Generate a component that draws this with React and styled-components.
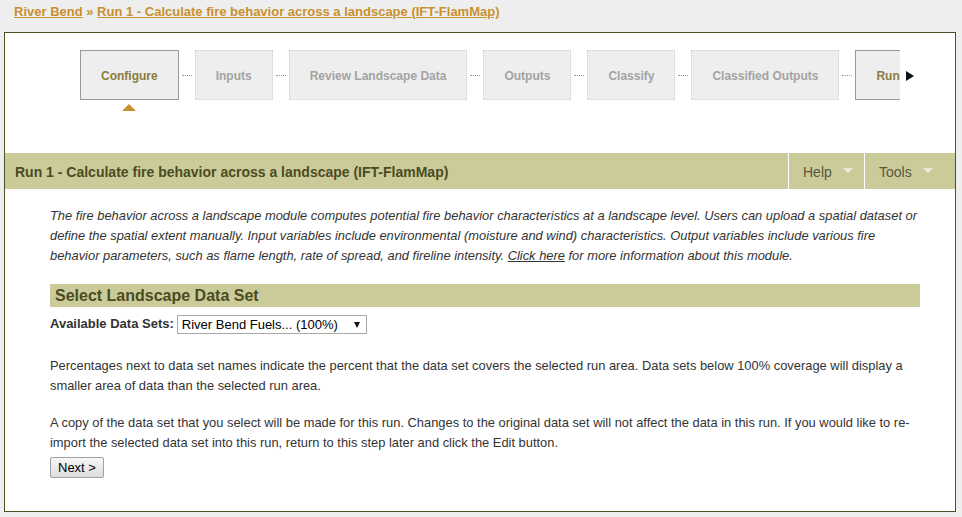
import styled, { createGlobalStyle } from 'styled-components';

const GlobalStyle = createGlobalStyle`
  html, body {
    margin: 0;
    padding: 0;
    background: #eeeeee;
    font-family: "Liberation Sans", Arial, sans-serif;
  }
`;

const Page = styled.div`
  padding: 3px 0 6px 4px;
`;

const Crumbs = styled.div`
  padding-left: 10px;
  height: 29px;
  font-size: 13px;
  font-weight: bold;
  line-height: 18px;
  color: #c8912e;

  a {
    color: #c8912e;
    text-decoration: underline;
  }
`;

const Frame = styled.div`
  width: 950px;
  height: 478px;
  border: 1px solid #4b5424;
  background: #ffffff;
  overflow: hidden;
`;

const StepsArea = styled.div`
  height: 120px;
  padding: 17px 0 0 75px;
  box-sizing: border-box;
  display: flex;
  align-items: flex-start;
`;

const StepsViewport = styled.div`
  width: 820px;
  overflow: hidden;
  height: 80px;
`;

const StepsTrack = styled.div`
  display: flex;
  align-items: center;
  width: max-content;
`;

const Step = styled.div`
  position: relative;
  height: 50px;
  box-sizing: border-box;
  padding: 1px 20px 0;
  display: flex;
  align-items: center;
  font-size: 12px;
  font-weight: bold;
  background: #eeeeee;
  color: ${({ $state }) => ($state === 'locked' ? '#a3a3a3' : '#8a7d3b')};
  border: 1px ${({ $state }) => ($state === 'locked' ? 'dotted #cfcfcf' : 'solid #999999')};
`;

const Pointer = styled.div`
  position: absolute;
  left: 50%;
  top: 53px;
  margin-left: -7px;
  width: 0;
  height: 0;
  border-left: 7px solid transparent;
  border-right: 7px solid transparent;
  border-bottom: 7px solid #c8912e;
`;

const Link = styled.div`
  width: 10px;
  margin: 1px 3px 0;
  border-top: 1px dotted #999999;
`;

const NextArrow = styled.div`
  margin: 21px 0 0 6px;
  width: 0;
  height: 0;
  border-top: 5px solid transparent;
  border-bottom: 5px solid transparent;
  border-left: 8px solid #111111;
`;

const HeaderBar = styled.div`
  display: flex;
  height: 36px;
  background: #cbcb9a;
  align-items: stretch;
`;

const HeaderTitle = styled.h1`
  flex: 1;
  margin: 0;
  padding: 1px 0 0 10px;
  display: flex;
  align-items: center;
  font-size: 14px;
  font-weight: bold;
  color: #4b4b22;
`;

const Menu = styled.div`
  width: ${({ $w }) => $w}px;
  border-left: 1px solid #ffffff;
  display: flex;
  align-items: center;
  padding: 1px 0 0 14px;
  box-sizing: border-box;
  gap: 11px;
  font-size: 14px;
  color: #56563a;
`;

const Caret = styled.span`
  width: 0;
  height: 0;
  border-left: 5px solid transparent;
  border-right: 5px solid transparent;
  border-top: 5px solid #ecebd6;
  margin-top: -2px;
`;

const Body = styled.div`
  padding: 17px 35px 0 45px;
  font-size: 12.9px;
  line-height: 20px;
  color: #333333;
`;

const Intro = styled.p`
  margin: 0;
  font-style: italic;

  a {
    color: #333333;
    text-decoration: underline;
  }
`;

const SectionHead = styled.h2`
  margin: 18px 0 0;
  height: 23px;
  line-height: 23px;
  padding-left: 5px;
  background: #cbcb9a;
  font-size: 16px;
  font-weight: bold;
  color: #4b4b22;
`;

const PickRow = styled.div`
  margin-top: 7px;
  display: flex;
  align-items: center;
  gap: 3px;
  height: 20px;
`;

const Label = styled.label`
  font-weight: bold;
  font-size: 13px;
  color: #333333;
`;

const SelectWrap = styled.div`
  position: relative;
  width: 190px;
  height: 19px;
`;

const Select = styled.select`
  appearance: none;
  width: 100%;
  height: 100%;
  margin: 0;
  padding: 0 0 0 4px;
  border: 1px solid #a9a9a9;
  background: #ffffff;
  font-family: "Liberation Sans", Arial, sans-serif;
  font-size: 13px;
  color: #000000;
`;

const SelectArrow = styled.span`
  position: absolute;
  right: 7px;
  top: 7px;
  width: 0;
  height: 0;
  border-left: 3.5px solid transparent;
  border-right: 3.5px solid transparent;
  border-top: 6px solid #111111;
  pointer-events: none;
`;

const Para = styled.p`
  margin: ${({ $top }) => $top}px 0 0;
`;

const Button = styled.button`
  margin-top: 4px;
  height: 21px;
  padding: 0 7px;
  border: 1px solid #a0a0a0;
  border-radius: 2px;
  background: linear-gradient(#f6f6f6, #dedede);
  font-family: "Liberation Sans", Arial, sans-serif;
  font-size: 13px;
  color: #000000;
`;

const steps = [
  { label: 'Configure', state: 'current' },
  { label: 'Inputs', state: 'locked' },
  { label: 'Review Landscape Data', state: 'locked' },
  { label: 'Outputs', state: 'locked' },
  { label: 'Classify', state: 'locked' },
  { label: 'Classified Outputs', state: 'locked' },
  { label: 'Run', state: 'available' },
];

const title = 'Run 1 - Calculate fire behavior across a landscape (IFT-FlamMap)';

export default function App() {
  return (
    <>
      <GlobalStyle />
      <Page>
        <Crumbs>
          <a>River Bend</a> » <a>{title}</a>
        </Crumbs>
        <Frame>
          <StepsArea>
            <StepsViewport>
              <StepsTrack>
                {steps.map((s, i) => [
                  i > 0 && <Link key={`l${i}`} />,
                  <Step key={s.label} $state={s.state}>
                    {s.label}
                    {s.state === 'current' && <Pointer />}
                  </Step>,
                ])}
              </StepsTrack>
            </StepsViewport>
            <NextArrow />
          </StepsArea>

          <HeaderBar>
            <HeaderTitle>{title}</HeaderTitle>
            <Menu $w={76}>
              Help <Caret />
            </Menu>
            <Menu $w={91}>
              Tools <Caret />
            </Menu>
          </HeaderBar>

          <Body>
            <Intro>
              The fire behavior across a landscape module computes potential fire behavior
              characteristics at a landscape level. Users can upload a spatial dataset or
              define the spatial extent manually. Input variables include environmental
              (moisture and wind) characteristics. Output variables include various fire
              behavior parameters, such as flame length, rate of spread, and fireline
              intensity. <a>Click here</a> for more information about this module.
            </Intro>

            <SectionHead>Select Landscape Data Set</SectionHead>
            <PickRow>
              <Label>Available Data Sets:</Label>
              <SelectWrap>
                <Select defaultValue="rb">
                  <option value="rb">River Bend Fuels... (100%)</option>
                </Select>
                <SelectArrow />
              </SelectWrap>
            </PickRow>

            <Para $top={22}>
              Percentages next to data set names indicate the percent that the data set
              covers the selected run area. Data sets below 100% coverage will display a
              smaller area of data than the selected run area.
            </Para>
            <Para $top={17}>
              A copy of the data set that you select will be made for this run. Changes to
              the original data set will not affect the data in this run. If you would like
              to re-import the selected data set into this run, return to this step later
              and click the Edit button.
            </Para>
            <Button>Next &gt;</Button>
          </Body>
        </Frame>
      </Page>
    </>
  );
}
